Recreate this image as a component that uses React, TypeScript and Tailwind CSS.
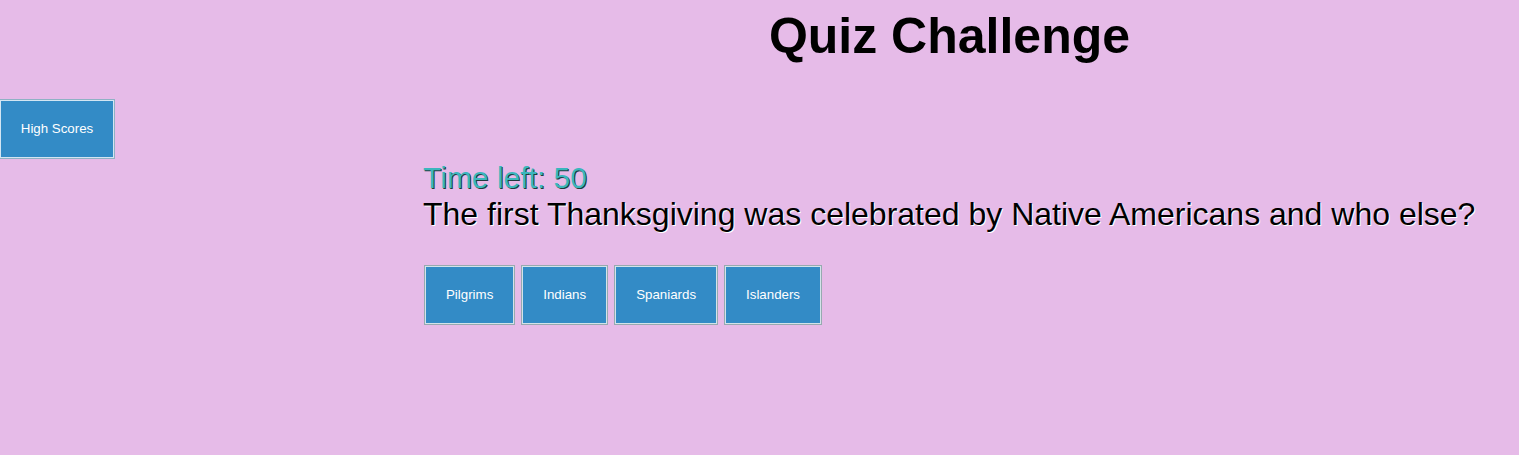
const answers = ['Pilgrims', 'Indians', 'Spaniards', 'Islanders']

const App = () => {
  return (
    <div className="flex min-h-[455px] w-full bg-[#e6bbe8] font-['Liberation_Sans',Arial,sans-serif]">
      <aside className="w-[380px] shrink-0 pt-[99px]">
        <button
          type="button"
          className="h-[60px] w-[115px] border border-l-0 border-[#8fb1c4] bg-[#338bc6] text-[13.3px] text-white shadow-[inset_0_0_0_1px_#d3e6f3]"
        >
          High Scores
        </button>
      </aside>
      <main className="flex-1">
        <h1 className="pt-[8px] text-center text-[50px] leading-[57px] font-bold text-black">Quiz Challenge</h1>
        <div className="mt-[96px] pl-[43px]">
          <p className="text-[30px] leading-[34.5px] text-[#3bb6bd] [text-shadow:1px_1px_0_#1f3a3c]">Time left: 50</p>
          <p className="text-[32px] leading-[36px] text-black [text-shadow:1px_1px_0_#ffffff]">
            The first Thanksgiving was celebrated by Native Americans and who else?
          </p>
          <div className="mt-[33px] flex gap-[6px] pl-[1px]">
            {answers.map((a) => (
              <button
                key={a}
                type="button"
                className="h-[60px] border border-[#97aab0] bg-[#338bc6] px-[21px] text-[13.3px] text-white shadow-[inset_0_0_0_1px_#d3e3ea]"
              >
                {a}
              </button>
            ))}
          </div>
        </div>
      </main>
    </div>
  )
}

export default App
